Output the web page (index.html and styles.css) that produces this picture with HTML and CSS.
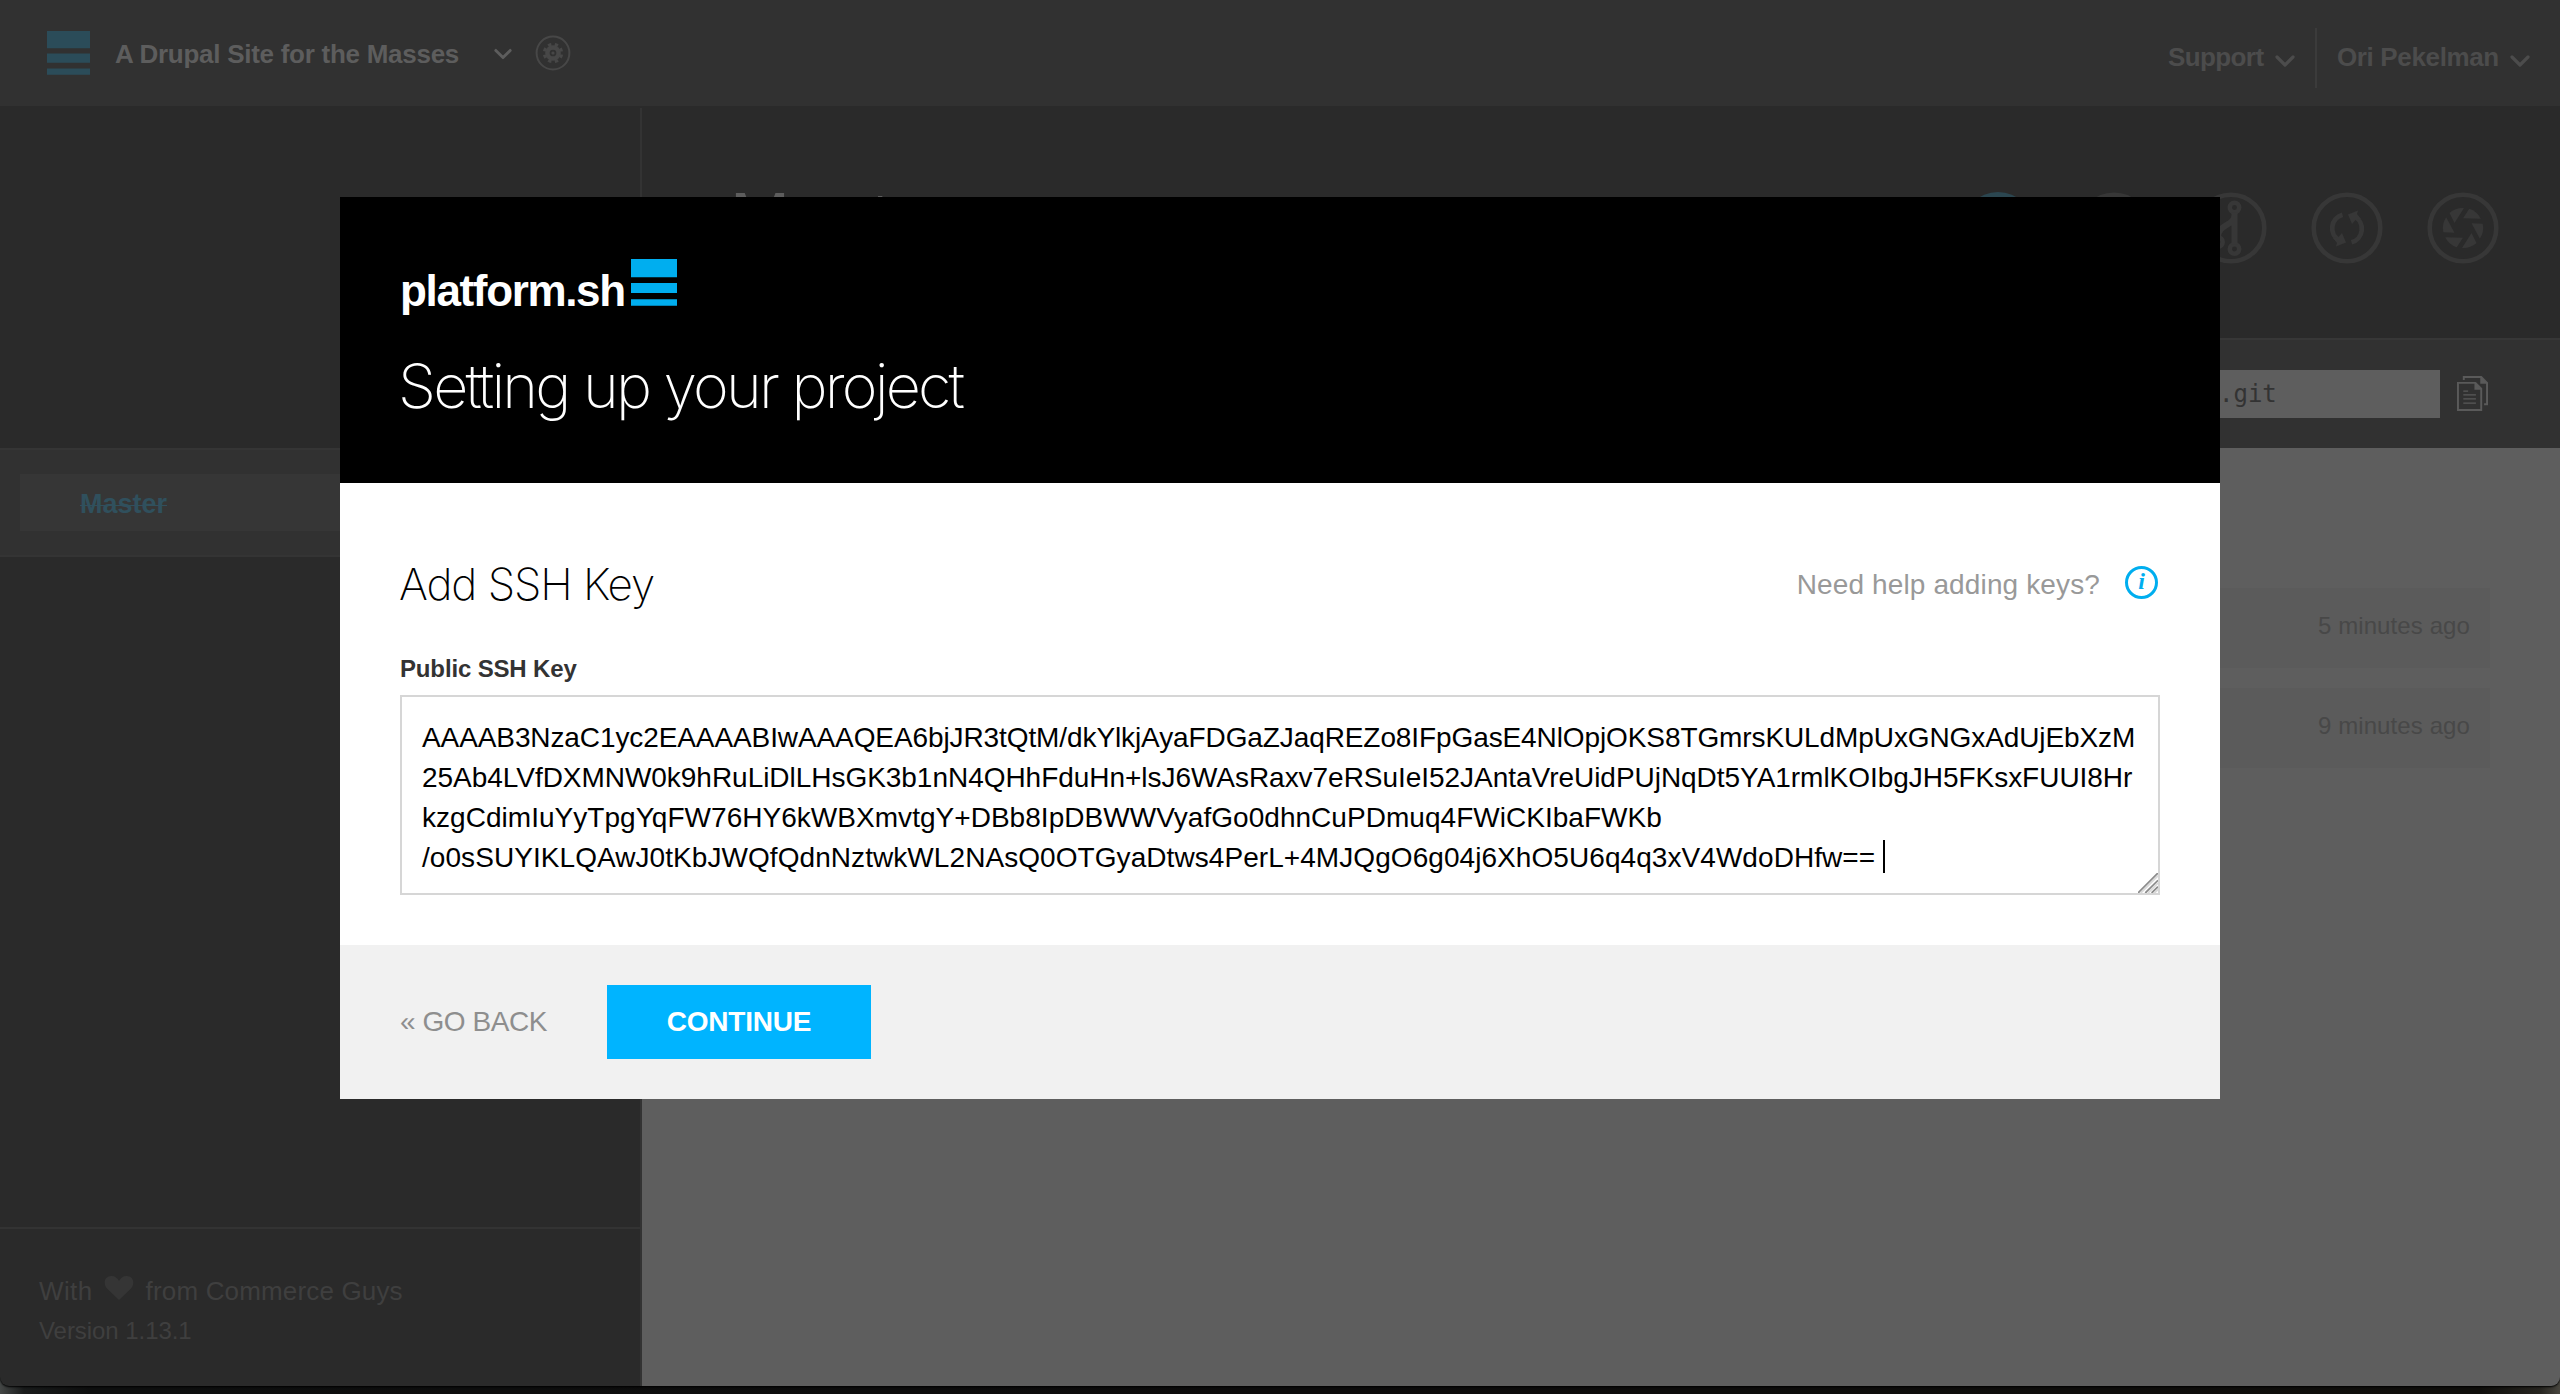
FILE: index.html
```html
<!DOCTYPE html>
<html lang="en">
<head>
<meta charset="utf-8">
<title>Setting up your project</title>
<link rel="stylesheet" href="styles.css">
</head>
<body>
<svg class="defs" aria-hidden="true">
  <symbol id="bars" viewBox="0 0 46 47"><path d="M0 0h46v18.300H0zM0 24h46v10H0zM0 40.200h46v6.600H0z"/></symbol>
  <symbol id="chevron" viewBox="0 0 20 14"><path d="M2 3l8 8 8-8" fill="none" stroke="currentColor" stroke-width="3.200" stroke-linecap="round" stroke-linejoin="round"/></symbol>
</svg>
<div class="window">
  <header class="topbar">
    <div class="project">
      <svg class="brand-mark"><use href="#bars"/></svg>
      <span class="project-name">A Drupal Site for the Masses</span>
      <svg class="chevron bright"><use href="#chevron"/></svg>
      <svg class="gear" viewBox="-18 -18 36 36">
        <circle r="16.400" fill="none" stroke="currentColor" stroke-width="2"/>
        <circle r="5.600" fill="none" stroke="currentColor" stroke-width="4.500"/>
        <circle r="8.600" fill="none" stroke="currentColor" stroke-width="3.200" stroke-dasharray="3.377 3.377" transform="rotate(10)"/>
        <circle r="1.600" fill="currentColor"/>
      </svg>
    </div>
    <nav class="account">
      <span class="menu support">Support <svg class="chevron"><use href="#chevron"/></svg></span>
      <span class="menu user">Ori Pekelman <svg class="chevron"><use href="#chevron"/></svg></span>
    </nav>
  </header>
  <div class="columns">
    <aside class="sidebar">
      <div class="branches"><div class="branch">Master</div></div>
      <footer class="credits">
        <p class="made"><span class="with">With</span>
          <svg class="heart" viewBox="0 0 30 24"><path d="M15 24L3 12.500C-1 8 0 0 7.500 0 11 0 13.500 2 15 5 16.500 2 19 0 22.500 0 30 0 31 8 27 12.500z"/></svg>
          <span class="from">from Commerce Guys</span></p>
        <p class="version">Version 1.13.1</p>
      </footer>
    </aside>
    <main class="main">
      <section class="env">
        <h1>Master</h1>
        <div class="actions">
          <svg viewBox="-36 -36 72 72" class="on"><circle r="36"/></svg>
          <svg viewBox="-36 -36 72 72"><circle r="33.300" class="ring"/></svg>
          <svg viewBox="-36 -36 72 72"><circle r="33.300" class="ring"/>
            <g fill="none" stroke="currentColor" stroke-width="4.500"><circle cx="3.500" cy="-20.500" r="4.700"/><circle cx="3.500" cy="21" r="4.700"/><circle cx="-13" cy="14" r="4.700"/><path stroke-width="6" d="M3.500-15.500v32M3.500-13C3.500-2-13-4-13 9"/></g></svg>
          <svg viewBox="-36 -36 72 72"><circle r="33.300" class="ring"/>
            <g id="turn"><path fill="none" stroke="currentColor" stroke-width="4.800" d="M4.500 14.300A14 14 0 0 0 7.500-11.500"/><path fill="currentColor" d="M1-13.500L11-17.500 10-14 14-9 9-8.500 5-4z"/></g>
            <use href="#turn" transform="rotate(180) translate(0 -1)"/></svg>
          <svg viewBox="-36 -36 72 72"><circle r="33.300" class="ring"/>
            <g fill="currentColor"><path id="blade" d="M-8.500-5L-13.500-15A20 20 0 0 1 1-20z"/><use href="#blade" transform="rotate(60)"/><use href="#blade" transform="rotate(120)"/><use href="#blade" transform="rotate(180)"/><use href="#blade" transform="rotate(240)"/><use href="#blade" transform="rotate(300)"/></g></svg>
        </div>
      </section>
      <section class="remote">
        <div class="git-url">.git</div>
        <svg class="copy" viewBox="0 0 32 36" fill="none" stroke="currentColor" stroke-width="2"><path d="M1 7h18l6 6v22H1z"/><path d="M19 7v6h6" fill="currentColor"/><path d="M7 4V1h18l6 6v22h-3"/><path d="M25 1v6h6" fill="currentColor"/><path stroke-width="1.200" d="M6.500 15.500h5M6.500 19.500h13M6.500 23.500h13M6.500 28h13"/></svg>
      </section>
      <section class="activity">
        <div class="event">5 minutes ago</div>
        <div class="event">9 minutes ago</div>
      </section>
    </main>
  </div>
  <div class="modal" role="dialog">
    <header class="modal-head">
      <div class="logo"><span>platform.sh</span><svg><use href="#bars"/></svg></div>
      <h2>Setting up your project</h2>
    </header>
    <div class="modal-body">
      <div class="section-head">
        <h3>Add SSH Key</h3>
        <span class="help">Need help adding keys?</span>
        <span class="info">i</span>
      </div>
      <div class="label">Public SSH Key</div>
      <div class="key">
        <div>AAAAB3NzaC1yc2EAAAABIwAAAQEA6bjJR3tQtM/dkYlkjAyaFDGaZJaqREZo8IFpGasE4NlOpjOKS8TGmrsKULdMpUxGNGxAdUjEbXzM</div>
        <div>25Ab4LVfDXMNW0k9hRuLiDlLHsGK3b1nN4QHhFduHn+lsJ6WAsRaxv7eRSuIeI52JAntaVreUidPUjNqDt5YA1rmlKOIbgJH5FKsxFUUI8Hr</div>
        <div>kzgCdimIuYyTpgYqFW76HY6kWBXmvtgY+DBb8IpDBWWVyafGo0dhnCuPDmuq4FWiCKIbaFWKb</div>
        <div>/o0sSUYIKLQAwJ0tKbJWQfQdnNztwkWL2NAsQ0OTGyaDtws4PerL+4MJQgO6g04j6XhO5U6q4q3xV4WdoDHfw==<i class="caret"></i></div>
        <svg class="grip" viewBox="0 0 22 22"><path d="M0 22L22 0M8 22L22 8M15 22l7-7" stroke="#8c8c8c" stroke-width="2"/><path d="M3 22L22 3M11 22L22 11M18 22l4-4" stroke="#d9d9d9" stroke-width="2"/></svg>
      </div>
    </div>
    <footer class="modal-foot">
      <span class="back">« GO BACK</span>
      <span class="continue">CONTINUE</span>
    </footer>
  </div>
</div>
</body>
</html>
```
FILE: styles.css
```css
* { box-sizing: border-box; margin: 0; padding: 0; }
body {
  width: 2560px; height: 1394px; overflow: hidden;
  font-family: "Liberation Sans", Arial, sans-serif;
  background: linear-gradient(90deg, #444746 0, #191b1b 24px, #0d0e0e 90px, #0c0b0b 1300px, #0f0e0b 2480px, #26241f 2540px, #48463f 2560px);
}
.defs { position: absolute; width: 0; height: 0; }
.window {
  position: relative; display: flex; flex-direction: column;
  height: 1386px; overflow: hidden; background: #2a2a2a;
  border-radius: 0 0 9px 9px; box-shadow: 0 1px 2px #000;
}

.topbar { display: flex; justify-content: space-between; height: 106px; margin-bottom: 2px; background: #313131; }
.project { display: flex; align-items: center; height: 106px; padding-left: 47px; color: #5d5d5d; }
.brand-mark { width: 43px; height: 44px; fill: #2b4c59; }
.project-name { margin: 2px 0 0 25px; width: 344px; font: bold 26px/40px "Liberation Sans", sans-serif; letter-spacing: -.27px; white-space: nowrap; }
.chevron { width: 20px; height: 14px; }
.bright { width: 18px; margin: 2px 1px 0 35px; }
.gear { width: 36px; height: 36px; margin-left: 22px; color: #474747; }
.account { display: flex; height: 60px; margin-top: 28px; font-weight: bold; font-size: 26px; line-height: 58px; color: #4c4c4c; }
.menu { display: flex; align-items: center; height: 58px; white-space: nowrap; }
.menu .chevron { margin-top: 7px; }
.support { width: 149px; height: 60px; padding-bottom: 2px; gap: 12px; border-right: 2px solid #3b3b3b; letter-spacing: -.6px; }
.user { width: 243px; padding-left: 20px; gap: 11px; letter-spacing: -.36px; }

.columns { display: flex; flex: 1; }
.sidebar { display: flex; flex-direction: column; justify-content: space-between; width: 642px; padding-top: 340px; border-right: 2px solid #333; }
.branches { height: 109px; padding: 24px 20px 0; background: #313131; border-top: 2px solid #353535; border-bottom: 2px solid #343434; }
.branch { height: 57px; padding-left: 60px; background: #363636; color: #30505d; font-size: 27px; font-weight: bold; line-height: 61px; text-decoration: line-through; text-decoration-thickness: 1px; }
.credits { height: 159px; padding: 46px 0 0 39px; border-top: 2px solid #333; color: #3f3f3f; }
.made { display: flex; align-items: center; font-size: 26px; line-height: 32px; }
.with { letter-spacing: .4px; }
.heart { width: 30px; height: 24px; margin: -6px 12px 0 11px; fill: #353535; }
.from { letter-spacing: .16px; }
.version { margin-top: 8px; font-size: 24px; line-height: 32px; letter-spacing: -.06px; }

.main { display: flex; flex-direction: column; flex: 1; }
.env { display: flex; justify-content: space-between; height: 230px; padding: 83.5px 61px 0 88px; }
.env h1 { font: 300 72px/72px "Liberation Sans", sans-serif; margin-top: -10px; letter-spacing: 1.500px; color: #5d5d5d; }
.actions { display: flex; gap: 44.200px; color: #373737; }
.actions svg { width: 72px; height: 72px; }
.on { fill: #2b4650; }
.ring { fill: none; stroke: #373737; stroke-width: 4.600px; }
.remote { display: flex; align-items: flex-start; height: 110px; padding: 30px 0 0 1500px; background: #313131; border-top: 2px solid #373737; }
.git-url { width: 298px; height: 48px; padding-left: 77px; background: #5e5e5e; color: #333; font: 24px/49px "DejaVu Sans Mono", monospace; }
.copy { width: 31px; height: 35px; margin: 6px 0 0 17px; color: #5a5a5a; }
.activity { display: flex; flex-direction: column; gap: 20px; flex: 1; padding: 140px 70px 0; background: #5e5e5e; }
.event { height: 80px; padding-right: 20px; background: #5b5b5b; color: #484848; font-size: 24px; line-height: 75px; letter-spacing: .1px; text-align: right; }

.modal { position: absolute; left: 340px; top: 197px; width: 1880px; background: #fff; }
.modal-head { height: 286px; padding: 62px 58px 0; background: #000; color: #fff; }
.logo { display: flex; height: 60px; padding-left: 2px; }
.logo span { width: 231px; margin-top: 7px; font: bold 44px/50px "Liberation Sans", sans-serif; letter-spacing: -1.350px; }
.logo svg { width: 46px; height: 47px; fill: #00aeef; }
.modal-head h2 { margin-top: 32px; font: 200 61px/70px Inter, sans-serif; letter-spacing: -2.800px; }
.modal-body { height: 462px; padding: 76px 60px 0; }
.section-head { display: flex; align-items: center; height: 50px; }
.section-head h3 { flex: 1; margin-left: -1px; font: 200 44px/50px Inter, sans-serif; letter-spacing: -1.050px; color: #000; }
.help { margin-top: 1px; font-size: 28px; letter-spacing: .13px; color: #999; }
.info { width: 33px; height: 33px; margin: -4px 2px 0 25px; border: 3px solid #00aeef; border-radius: 50%; color: #00aeef; font: italic bold 24px/25px "Liberation Serif", serif; text-align: center; }
.label { margin-top: 45px; font-size: 24px; font-weight: bold; line-height: 30px; letter-spacing: -.15px; color: #333; }
.key { position: relative; height: 200px; margin-top: 11px; padding: 21px 0 0 20px; border: 2px solid #d6d6d6; font-size: 28px; line-height: 40px; color: #000; white-space: nowrap; }
.key div { height: 40px; }
.key div:nth-child(1) { letter-spacing: -.1px; }
.key div:nth-child(2) { letter-spacing: -.035px; }
.key div:nth-child(3) { letter-spacing: .035px; }
.key div:nth-child(4) { letter-spacing: .065px; }
.caret { display: inline-block; width: 2px; height: 33px; margin-left: 8px; vertical-align: -6px; background: #000; }
.grip { position: absolute; right: 0; bottom: 0; width: 20px; height: 20px; }
.modal-foot { display: flex; height: 154px; padding: 40px 60px; background: #f1f1f1; font-size: 28px; line-height: 74px; }
.back { width: 207px; color: #8e8e8e; letter-spacing: -.45px; }
.continue { width: 264px; height: 74px; background: #00b4ff; color: #fff; font-weight: bold; letter-spacing: -.2px; text-align: center; }
```
